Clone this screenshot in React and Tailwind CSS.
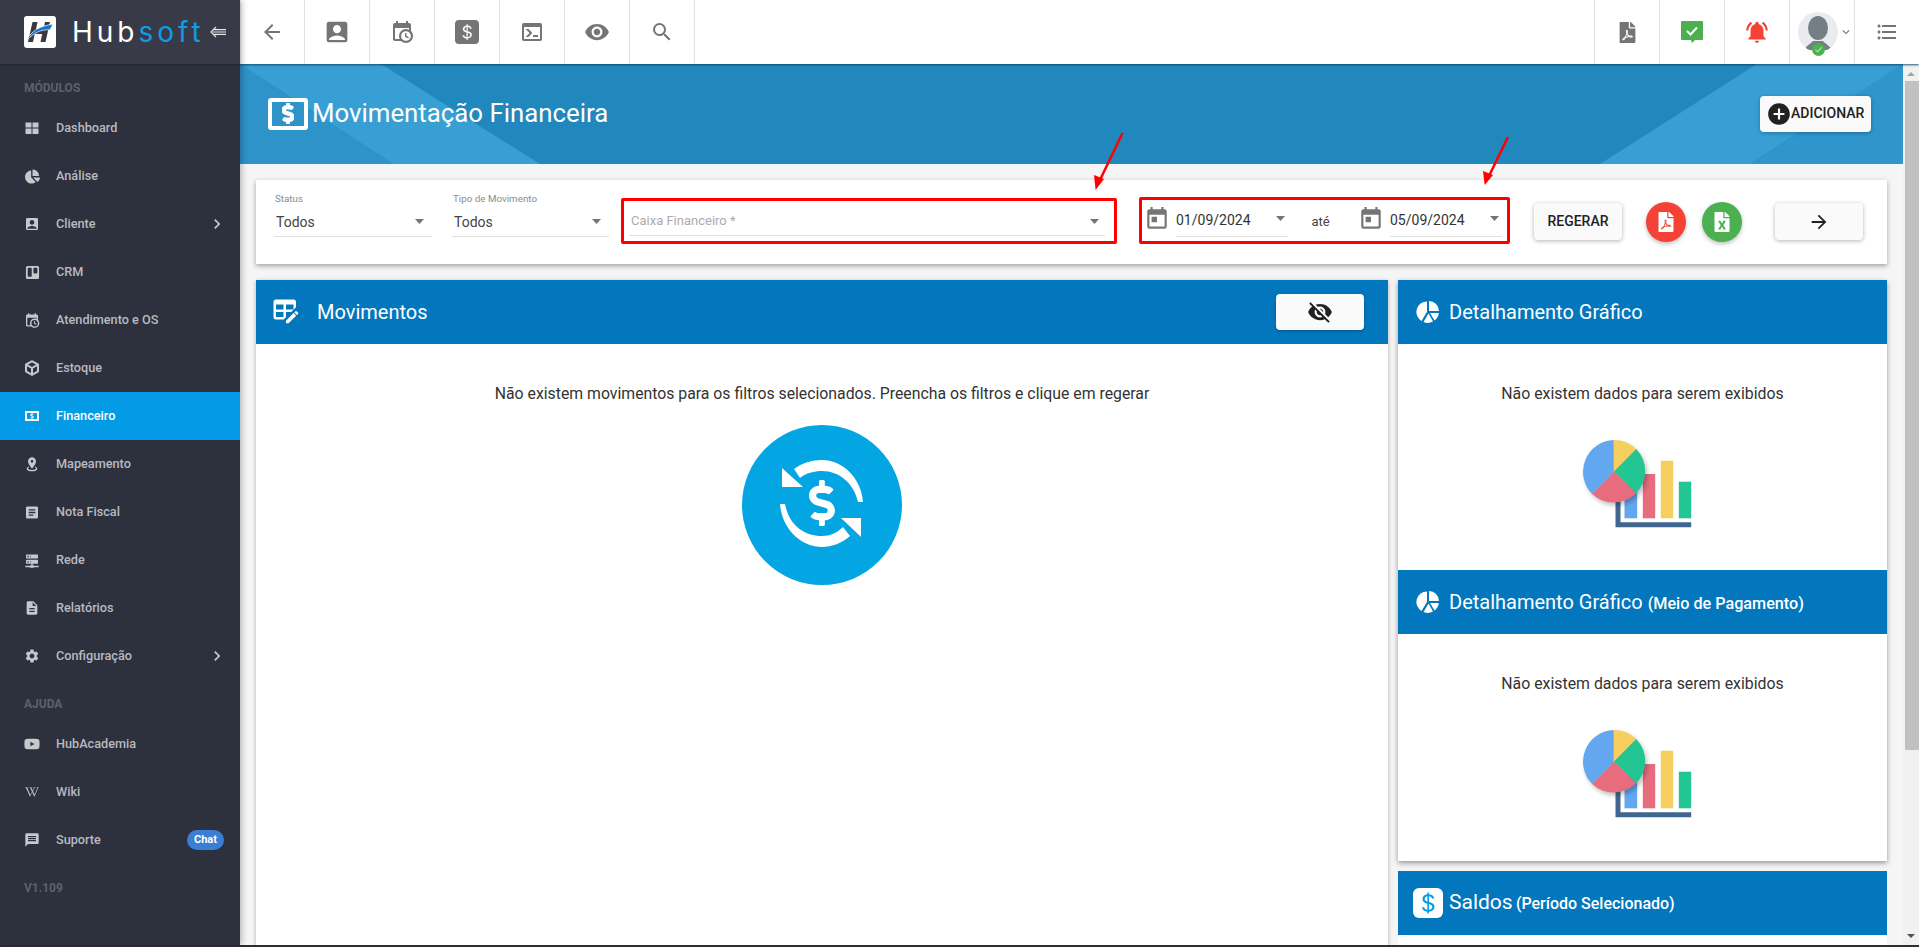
import {
  MdAccountBox, MdArrowBack, MdArrowForward, MdArticle, MdChevronRight, MdDescription, MdExpandMore,
  MdFormatListBulleted, MdMessage, MdNotificationsActive, MdSearch, MdSettings, MdToday, MdVisibility, MdVisibilityOff, MdAddCircle,
} from "react-icons/md";
import { FaChartPie, FaDollarSign, FaFilePdf, FaFileExcel, FaTrello, FaWikipediaW, FaYoutube } from "react-icons/fa";
import { BsCurrencyDollar } from "react-icons/bs";
import { LuBox } from "react-icons/lu";

// MDI glyphs the packages don't carry in filled form
const CALENDAR_CLOCK = "M15,13H16.5V15.82L18.94,17.23L18.19,18.53L15,16.69V13M19,8H5V19H9.67C9.24,18.09 9,17.07 9,16A7,7 0 0,1 16,9C17.07,9 18.09,9.24 19,9.67V8M5,21C3.89,21 3,20.1 3,19V5C3,3.89 3.89,3 5,3H6V1H8V3H16V1H18V3H19A2,2 0 0,1 21,5V11.1C22.24,12.36 23,14.09 23,16A7,7 0 0,1 16,23C14.09,23 12.36,22.24 11.1,21H5M16,11.15A4.85,4.85 0 0,0 11.15,16C11.15,18.68 13.32,20.85 16,20.85A4.85,4.85 0 0,0 20.85,16C20.85,13.32 18.68,11.15 16,11.15Z";
const MAP_RADIUS = "M12,2C15.31,2 18,4.66 18,7.95C18,12.41 12,19 12,19C12,19 6,12.41 6,7.95C6,4.66 8.69,2 12,2M12,6A2,2 0 0,0 10,8A2,2 0 0,0 12,10A2,2 0 0,0 14,8A2,2 0 0,0 12,6M20,19C20,21.21 16.42,23 12,23C7.58,23 4,21.21 4,19C4,17.71 5.22,16.56 7.11,15.83L7.75,16.74C6.67,17.19 6,17.81 6,18.5C6,19.88 8.69,21 12,21C15.31,21 18,19.88 18,18.5C18,17.81 17.33,17.19 16.25,16.74L16.89,15.83C18.78,16.56 20,17.71 20,19Z";
const SERVER_NETWORK = "M13,19H14A1,1 0 0,1 15,20H22V22H15A1,1 0 0,1 14,23H10A1,1 0 0,1 9,22H2V20H9A1,1 0 0,1 10,19H11V17H4A1,1 0 0,1 3,16V12A1,1 0 0,1 4,11H20A1,1 0 0,1 21,12V16A1,1 0 0,1 20,17H13V19M4,3H20A1,1 0 0,1 21,4V8A1,1 0 0,1 20,9H4A1,1 0 0,1 3,8V4A1,1 0 0,1 4,3M9,7H10V5H9V7M9,15H10V13H9V15M5,5V7H7V5H5M5,13V15H7V13H5Z";
const CONSOLE = "M20,19V7H4V19H20M20,3A2,2 0 0,1 22,5V19A2,2 0 0,1 20,21H4A2,2 0 0,1 2,19V5C2,3.89 2.9,3 4,3H20M13,17V15H18V17H13M9.58,13L5.57,9H8.4L11.7,12.3C12.09,12.69 12.09,13.33 11.7,13.72L8.42,17H5.59L9.58,13Z";
const TABLE_EDIT = "M21.7,13.35L20.7,14.35L18.65,12.3L19.65,11.3C19.86,11.09 20.21,11.09 20.42,11.3L21.7,12.58C21.91,12.79 21.91,13.14 21.7,13.35M12,18.94L18.07,12.88L20.12,14.93L14.06,21H12V18.94M4,2H18A2,2 0 0,1 20,4V8.17L16.17,12H12V16.17L10.17,18H4A2,2 0 0,1 2,16V4A2,2 0 0,1 4,2M4,6V10H10V6H4M12,6V10H18V6H12M4,12V16H10V12H4Z";

function Mdi({ d, size = 24, className = "" }) {
  return (
    <svg width={size} height={size} viewBox="0 0 24 24" fill="currentColor" className={className}>
      <path d={d} />
    </svg>
  );
}

function GridIcon({ size }) {
  return (
    <svg width={size} height={size} viewBox="0 0 16 16" fill="currentColor">
      <rect x="1.5" y="2.5" width="6" height="5" />
      <rect x="8.5" y="2.5" width="6" height="5" />
      <rect x="1.5" y="8.5" width="6" height="5.5" />
      <rect x="8.5" y="8.5" width="6" height="5.5" />
    </svg>
  );
}

function CashIcon() {
  return (
    <span className="flex h-[10px] w-[14px] items-center justify-center border-2 border-current">
      <FaDollarSign size={6} />
    </span>
  );
}

const MODULOS = [
  { name: "Dashboard", icon: <GridIcon size={16} /> },
  { name: "Análise", icon: <FaChartPie size={15} /> },
  { name: "Cliente", icon: <MdAccountBox size={18} />, arrow: true },
  { name: "CRM", icon: <FaTrello size={15} /> },
  { name: "Atendimento e OS", icon: <Mdi d={CALENDAR_CLOCK} size={17} /> },
  { name: "Estoque", icon: <LuBox size={16} strokeWidth={3} /> },
  { name: "Financeiro", icon: <CashIcon />, active: true },
  { name: "Mapeamento", icon: <Mdi d={MAP_RADIUS} size={18} /> },
  { name: "Nota Fiscal", icon: <MdArticle size={19} /> },
  { name: "Rede", icon: <Mdi d={SERVER_NETWORK} size={17} /> },
  { name: "Relatórios", icon: <MdDescription size={18} /> },
  { name: "Configuração", icon: <MdSettings size={18} />, arrow: true },
];

const AJUDA = [
  { name: "HubAcademia", icon: <FaYoutube size={16} /> },
  { name: "Wiki", icon: <FaWikipediaW size={14} /> },
  { name: "Suporte", icon: <MdMessage size={18} />, badge: "Chat" },
];

function SectionLabel({ children }) {
  return <div className="flex h-10 items-center pl-6 pt-[7px] text-[12px] font-bold text-[#5d606c]">{children}</div>;
}

function NavItem({ item }) {
  return (
    <div className={`flex h-12 items-center pl-6 pr-4 text-[12.7px] font-medium ${item.active ? "bg-[#039be5] text-white" : "text-[#b9bac0]"}`}>
      <span className="flex w-8 items-center text-[#c7c8cc]">
        <span className={`flex w-[16px] items-center justify-center ${item.active ? "text-white" : ""}`}>{item.icon}</span>
      </span>
      <span className="flex-1">{item.name}</span>
      {item.arrow && <MdChevronRight size={20} className="-mr-[3px] text-[#c7c8cc]" />}
      {item.badge && (
        <span className="flex h-5 w-[37px] items-center justify-center rounded-full bg-[#3a7fd5] text-[11px] font-bold text-white">{item.badge}</span>
      )}
    </div>
  );
}

function Sidebar() {
  return (
    <aside className="relative z-20 flex w-60 shrink-0 flex-col bg-[#2d303d] shadow-[2px_0_6px_rgba(0,0,0,0.25)]">
      <div className="flex h-16 items-center bg-[#383b47] pl-6 shadow-[0_1px_2px_rgba(0,0,0,0.25)]">
        <svg width="32" height="32" viewBox="0 0 32 32" className="shrink-0">
          <rect width="32" height="32" rx="3" fill="#fff" />
          <path d="M8.5 6h5l-1.5 7h7.5L21 6h5l-4.5 20h-5l1.7-8h-7.5L9 26H4z" fill="#3a3a3e" />
          <path d="M3 24C7 15 16 10 29 8l-3 6C17 13 10 17 3 24z" fill="#1174cf" stroke="#fff" strokeWidth="0.7" />
        </svg>
        <span className="ml-4 font-[Inter,sans-serif] text-[28px] font-normal leading-none tracking-[4px] text-white">
          Hub<span className="text-[#0f9be8]">soft</span>
        </span>
        <svg width="16" height="12" viewBox="0 0 16 12" fill="none" stroke="#e6e6e8" strokeWidth="1.2" className="ml-[5px] shrink-0">
          <path d="M6 1 1 6l5 5M3 3.6h13M3 6h13M3 8.4h13" />
        </svg>
      </div>
      <SectionLabel>MÓDULOS</SectionLabel>
      {MODULOS.map((item) => (
        <NavItem key={item.name} item={item} />
      ))}
      <SectionLabel>AJUDA</SectionLabel>
      {AJUDA.map((item) => (
        <NavItem key={item.name} item={item} />
      ))}
      <div className="flex h-12 items-center pl-6 text-[12px] font-bold text-[#5d606c]">V1.109</div>
    </aside>
  );
}

function ToolCell({ children, className = "" }) {
  return <div className={`flex h-16 w-[65px] items-center justify-center text-[#757575] ${className}`}>{children}</div>;
}

function Topbar() {
  const left = [
    <MdArrowBack size={24} key="back" />,
    <MdAccountBox size={24} key="acc" className="scale-[1.15]" />,
    <Mdi d={CALENDAR_CLOCK} size={24} key="cal" />,
    <span key="usd" className="flex h-6 w-6 items-center justify-center rounded-[4px] bg-[#757575] text-white"><BsCurrencyDollar size={18} /></span>,
    <Mdi d={CONSOLE} size={24} key="con" />,
    <MdVisibility size={26} key="eye" />,
    <MdSearch size={24} key="search" />,
  ];
  return (
    <header className="relative z-10 flex h-16 shrink-0 bg-white shadow-[0_1px_2px_rgba(10,70,110,0.9)]">
      {left.map((icon) => (
        <ToolCell key={icon.key} className="border-r-[1.5px] border-[#e2e2e2]">{icon}</ToolCell>
      ))}
      <div className="flex-1" />
      <ToolCell className="border-l-[1.5px] border-[#e2e2e2]"><FaFilePdf size={21} /></ToolCell>
      <ToolCell className="border-l-[1.5px] border-[#e2e2e2]">
        <svg width="22" height="22" viewBox="0 0 22 22">
          <path d="M1 0h20a1 1 0 0 1 1 1v17a1 1 0 0 1-1 1h-7l-3 3-1-3H1a1 1 0 0 1-1-1V1a1 1 0 0 1 1-1z" fill="#4caf50" />
          <path d="M6 10l3.5 3.5L16 6.5" stroke="#fff" strokeWidth="2" fill="none" />
        </svg>
      </ToolCell>
      <ToolCell className="border-l-[1.5px] border-[#e2e2e2] text-[#f44336]"><MdNotificationsActive size={26} /></ToolCell>
      <ToolCell className="relative justify-start border-l-[1.5px] border-[#e2e2e2] pl-2">
        <span className="relative flex h-10 w-10 shrink-0 overflow-hidden rounded-full bg-[#e9ebee]">
          <svg width="40" height="40" viewBox="0 0 40 40" fill="#757d85">
            <ellipse cx="20" cy="16" rx="10" ry="12" />
            <path d="M7 38c0-4 6-6 8-9h10c2 3 8 5 8 9z" />
          </svg>
        </span>
        <span className="absolute left-[22px] top-[43px] flex h-[13px] w-[13px] items-center justify-center rounded-full bg-[#4caf50]">
          <svg width="9" height="9" viewBox="0 0 10 10" fill="none" stroke="#a5d6a7" strokeWidth="1.5"><path d="M1.5 5l2.5 2.5L8.5 2.5" /></svg>
        </span>
        <MdExpandMore size={14} className="ml-[1px] shrink-0" />
      </ToolCell>
      <ToolCell className="w-[63px] border-l-[1.5px] border-[#e2e2e2]"><MdFormatListBulleted size={24} /></ToolCell>
    </header>
  );
}

function Banner() {
  return (
    <section className="relative flex h-[100px] shrink-0 items-center justify-between overflow-hidden bg-[#2088bd] pl-7 pr-[32px]">
      <svg className="absolute inset-0" width="1663" height="100" viewBox="0 0 1663 100">
        <polygon points="0,0 141,0 300,100 153,100" fill="#389fd5" />
        <polygon points="0,0 153,100 0,100" fill="#2e93c9" />
        <polygon points="1517,0 1663,0 1510,100 1360,100" fill="#389fd5" />
        <polygon points="1663,0 1663,100 1510,100" fill="#2f96cc" />
      </svg>
      <div className="relative -mt-[1px] flex items-center">
        <span className="flex h-8 w-10 items-center justify-center rounded-[3px] border-[4px] border-white text-white">
          <svg width="12" height="21" viewBox="0 0 288 512" fill="currentColor" stroke="currentColor" strokeWidth="30">
            <path d="M209.2 233.4l-108-31.6C88.7 198.2 80 186.5 80 173.5c0-16.3 13.2-29.5 29.5-29.5h66.3c12.2 0 24.2 3.7 34.2 10.5 6.1 4.1 14.3 3.1 19.5-2l34.8-34c7.1-6.9 6.1-18.4-1.8-24.5C238 74.8 207.4 64.1 176 64V16c0-8.8-7.2-16-16-16h-32c-8.8 0-16 7.2-16 16v48h-2.5C45.8 64-5.4 118.7.5 183.6c4.2 46.1 39.4 83.6 83.8 96.6l102.5 30c12.5 3.7 21.2 15.3 21.2 28.3 0 16.3-13.2 29.5-29.5 29.5h-66.3C100 368 88 364.3 78 357.5c-6.1-4.1-14.3-3.1-19.5 2l-34.8 34c-7.1 6.9-6.1 18.4 1.8 24.5 24.5 19.2 55.1 29.9 86.5 30v48c0 8.8 7.2 16 16 16h32c8.8 0 16-7.2 16-16v-48.2c46.6-.9 90.3-28.6 105.7-72.7 21.5-61.6-14.6-124.8-72.5-141.7z" />
          </svg>
        </span>
        <h1 className="-mt-[2px] ml-1 text-[25.8px] leading-8 text-white">Movimentação Financeira</h1>
      </div>
      <button className="relative -mt-[1px] flex h-9 w-[111px] items-center rounded-[4px] bg-[#fafafa] pl-2 text-[14px] font-medium text-[#212121] shadow-[0_1px_4px_rgba(0,0,0,0.3)]">
        <MdAddCircle size={26} className="-ml-[2px] mr-[-1px] shrink-0" />
        ADICIONAR
      </button>
    </section>
  );
}

function Caret({ className = "" }) {
  return (
    <svg width="9" height="5" viewBox="0 0 9 5" className={`shrink-0 ${className}`}>
      <polygon points="0,0 9,0 4.5,5" fill="#757575" />
    </svg>
  );
}

function SelectField({ label, value, width }) {
  return (
    <div className={`${width} shrink-0 pt-3`}>
      <div className="pl-[1px] text-[9.8px] leading-[14px] text-[#8b8b8b]">{label}</div>
      <div className="flex h-[31px] items-center justify-between border-b border-[#e0e0e0] pl-[2px] pr-2 pt-[2px] text-[14px] text-[#444]">
        {value}
        <Caret className="-mt-[2px]" />
      </div>
    </div>
  );
}

function DateField({ value }) {
  return (
    <>
      <MdToday size={26} className="-mt-[4px] shrink-0 text-[#757575]" />
      <div className="ml-[6px] flex h-[32px] w-[112px] shrink-0 items-center justify-between border-b border-[#e0e0e0] pr-[3px] text-[14px] text-[#333]">
        {value}
        <Caret className="-mt-[4px]" />
      </div>
    </>
  );
}

function FilterCard() {
  return (
    <section className="flex h-[84px] shrink-0 items-start bg-white pl-[18px] shadow-[0_2px_5px_rgba(0,0,0,0.35)]">
      <SelectField label="Status" value="Todos" width="w-[158px]" />
      <SelectField label="Tipo de Movimento" value="Todos" width="ml-5 w-[157px]" />
      <div className="ml-3 mt-[18px] h-[46px] w-[496px] shrink-0 rounded-[2px] border-[3px] border-[#ff0000] pl-[5px] pr-[9px]">
        <div className="flex h-[35px] items-center justify-between border-b border-[#e0e0e0] pl-[2px] pr-[6px] pt-[6px] text-[13px] text-[#b0a8b0]">
          Caixa Financeiro *
          <Caret />
        </div>
      </div>
      <div className="ml-[22px] mt-[17px] flex h-[47px] w-[371px] shrink-0 items-center rounded-[2px] border-[3px] border-[#ff0000] pl-[2px]">
        <DateField value="01/09/2024" />
        <div className="w-[70px] shrink-0 pr-[5px] pt-[2px] text-center text-[13px] text-[#444]">até</div>
        <DateField value="05/09/2024" />
      </div>
      <button className="ml-[24px] mt-[23px] h-[37px] w-[88px] shrink-0 rounded-[4px] bg-[#fafafa] text-[14px] font-medium text-[#222] shadow-[0_1px_4px_rgba(0,0,0,0.3)]">REGERAR</button>
      <span className="ml-6 mt-[22px] flex h-10 w-10 shrink-0 items-center justify-center rounded-full bg-[#f44336] text-white shadow-[0_2px_4px_rgba(0,0,0,0.25)]"><FaFilePdf size={20} /></span>
      <span className="ml-4 mt-[22px] flex h-10 w-10 shrink-0 items-center justify-center rounded-full bg-[#4caf50] text-white shadow-[0_2px_4px_rgba(0,0,0,0.25)]"><FaFileExcel size={20} /></span>
      <button className="ml-[33px] mt-[23px] flex h-[37px] w-[88px] shrink-0 items-center justify-center rounded-[4px] bg-[#fafafa] text-[#222] shadow-[0_1px_4px_rgba(0,0,0,0.3)]"><MdArrowForward size={22} /></button>
    </section>
  );
}

function PanelHeader({ children }) {
  return <div className="flex h-16 shrink-0 items-center bg-[#0277bd] text-white">{children}</div>;
}

function PieIcon() {
  return (
    <svg width="24" height="24" viewBox="0 0 24 24" fill="#fff" className="ml-[18px] shrink-0">
      <path d="M11 1.5A10.5 10.5 0 0 0 5.5 21L11 12z" />
      <path d="M13 1v10h10A10 10 0 0 0 13 1z" />
      <path d="M7.5 22A10.5 10.5 0 0 0 17 21.5L12.5 13.5z" />
      <path d="M14 13l4.5 7.5A10.5 10.5 0 0 0 22.8 13z" />
    </svg>
  );
}

function ChartArt() {
  return (
    <svg width="120" height="120" viewBox="0 0 120 120" className="mx-auto mt-[19px] overflow-visible">
      <rect x="41.5" y="60" width="12.7" height="33.3" fill="#62a7ef" />
      <rect x="59.8" y="49" width="12.4" height="44.3" fill="#e66c7e" />
      <rect x="77.8" y="35.7" width="12.4" height="57.6" fill="#f7cf5e" />
      <rect x="95.8" y="56.7" width="12.4" height="36.6" fill="#23c693" />
      <path d="M32.5 70h5v27.3h70.7v5H32.5z" fill="#40668f" />
      <g className="drop-shadow-[2px_3px_2px_rgba(0,0,0,0.25)]">
        <path d="M30.8 46.7V15A31.7 31.7 0 0 0 9.2 69z" fill="#62a7ef" />
        <path d="M30.8 46.7V15A31.7 31.7 0 0 1 53.2 24z" fill="#f7cf5e" />
        <path d="M30.8 46.7L53.2 24A31.7 31.7 0 0 1 53.2 68.3z" fill="#23c693" />
        <path d="M30.8 46.7L53.2 68.3A31.7 31.7 0 0 1 9.2 69z" fill="#e66c7e" />
      </g>
    </svg>
  );
}

function MoneyBadge() {
  return (
    <div className="mx-auto mt-[19px] flex h-40 w-40 items-center justify-center rounded-full bg-[#03a5e2]">
      <svg width="160" height="160" viewBox="0 0 160 160" fill="#fff">
        <path d="M121 77C119 52 100 35 80 35C70 35 60 38 52 44L58 53C64 48 72 46 80 46C97 46 112 58 116 77Z" />
        <polygon points="40,43 40,62 61,62" />
        <path d="M38 79C40 105 60 122 80 122C90 122 100 118 108 111L101 102C95 108 88 111 80 111C62 111 47 100 43 79Z" />
        <polygon points="119,93 119,112 99,93" />
        <path transform="translate(67 55) scale(0.09)" d="M209.2 233.4l-108-31.6C88.7 198.2 80 186.5 80 173.5c0-16.3 13.2-29.5 29.5-29.5h66.3c12.2 0 24.2 3.7 34.2 10.5 6.1 4.1 14.3 3.1 19.5-2l34.8-34c7.1-6.9 6.1-18.4-1.8-24.5C238 74.8 207.4 64.1 176 64V16c0-8.8-7.2-16-16-16h-32c-8.8 0-16 7.2-16 16v48h-2.5C45.8 64-5.4 118.7.5 183.6c4.2 46.1 39.4 83.6 83.8 96.6l102.5 30c12.5 3.7 21.2 15.3 21.2 28.3 0 16.3-13.2 29.5-29.5 29.5h-66.3C100 368 88 364.3 78 357.5c-6.1-4.1-14.3-3.1-19.5 2l-34.8 34c-7.1 6.9-6.1 18.4 1.8 24.5 24.5 19.2 55.1 29.9 86.5 30v48c0 8.8 7.2 16 16 16h32c8.8 0 16-7.2 16-16v-48.2c46.6-.9 90.3-28.6 105.7-72.7 21.5-61.6-14.6-124.8-72.5-141.7z" />
      </svg>
    </div>
  );
}

function MovimentosPanel() {
  return (
    <section className="flex min-w-0 flex-1 flex-col bg-white shadow-[0_1px_4px_rgba(0,0,0,0.3)]">
      <PanelHeader>
        <Mdi d={TABLE_EDIT} size={30} className="ml-[15px] shrink-0" />
        <h2 className="ml-[16px] flex-1 text-[20px]">Movimentos</h2>
        <button className="mr-6 flex h-9 w-[88px] items-center justify-center rounded-[4px] bg-[#fafafa] text-[#212121] shadow-[0_1px_3px_rgba(0,0,0,0.3)]"><MdVisibilityOff size={26} /></button>
      </PanelHeader>
      <p className="pt-[38px] text-center text-[15.8px] leading-6 text-[#333]">Não existem movimentos para os filtros selecionados. Preencha os filtros e clique em regerar</p>
      <MoneyBadge />
    </section>
  );
}

function ChartPanel({ title, small, height }) {
  return (
    <section className={`${height} shrink-0 overflow-hidden bg-white`}>
      <PanelHeader>
        <PieIcon />
        <h2 className="ml-[9px] text-[20px]">
          {title} {small && <span className="text-[16.2px] font-medium">{small}</span>}
        </h2>
      </PanelHeader>
      <p className="pt-[38px] text-center text-[15.85px] leading-6 text-[#333]">Não existem dados para serem exibidos</p>
      <ChartArt />
    </section>
  );
}

function RightColumn() {
  return (
    <div className="flex w-[489px] shrink-0 flex-col">
      <div className="shrink-0 shadow-[0_2px_5px_rgba(0,0,0,0.4)]">
        <ChartPanel title="Detalhamento Gráfico" height="h-[290px]" />
        <ChartPanel title="Detalhamento Gráfico" small="(Meio de Pagamento)" height="h-[291px]" />
      </div>
      <section className="mt-[10px] flex-1 bg-white">
        <PanelHeader>
          <span className="ml-[15px] flex h-[30px] w-[30px] shrink-0 items-center justify-center rounded-[6px] bg-white text-[#039be5]"><BsCurrencyDollar size={24} /></span>
          <h2 className="ml-[6px] text-[21px]">
            Saldos <span className="-ml-[2px] text-[16px] font-medium">(Período Selecionado)</span>
          </h2>
        </PanelHeader>
      </section>
    </div>
  );
}

function Scrollbar() {
  return (
    <div className="flex w-4 shrink-0 flex-col bg-[#f1f1f1]">
      <div className="flex h-[17px] shrink-0 items-center justify-center pt-[2px]">
        <svg width="8" height="4" viewBox="0 0 8 4"><polygon points="4,0 8,4 0,4" fill="#a3a3a3" /></svg>
      </div>
      <div className="ml-[2px] h-[669px] shrink-0 bg-[#c1c1c1]" />
      <div className="flex flex-1 items-end justify-center pb-[7px]">
        <svg width="8" height="4" viewBox="0 0 8 4"><polygon points="0,0 8,0 4,4" fill="#505050" /></svg>
      </div>
    </div>
  );
}

export default function App() {
  return (
    <div className="relative flex h-[947px] w-full flex-col overflow-hidden bg-[#f5f5f5] font-[Roboto,sans-serif]">
      <div className="flex min-h-0 flex-1">
        <Sidebar />
        <div className="flex min-w-0 flex-1 flex-col">
          <Topbar />
          <div className="flex min-h-0 flex-1">
            <main className="flex min-w-0 flex-1 flex-col overflow-hidden">
              <Banner />
              <div className="flex min-h-0 flex-1 flex-col px-4 pt-4">
                <FilterCard />
                <div className="mt-4 flex min-h-0 flex-1 gap-[10px]">
                  <MovimentosPanel />
                  <RightColumn />
                </div>
              </div>
            </main>
            <Scrollbar />
          </div>
        </div>
      </div>
      <div className="h-[2px] shrink-0 bg-[#2b2e36]" />
      {/* setas vermelhas de anotação */}
      <svg className="pointer-events-none absolute left-0 top-0 z-30" width="1919" height="947" viewBox="0 0 1919 947">
        <line x1="1122.6" y1="133" x2="1099" y2="182" stroke="#f00" strokeWidth="2.5" />
        <polygon points="1095.6,190 1094,175 1104,179" fill="#f00" />
        <line x1="1508" y1="137" x2="1488" y2="178" stroke="#f00" strokeWidth="2.5" />
        <polygon points="1484.7,185 1483,171 1493,175" fill="#f00" />
      </svg>
    </div>
  );
}
